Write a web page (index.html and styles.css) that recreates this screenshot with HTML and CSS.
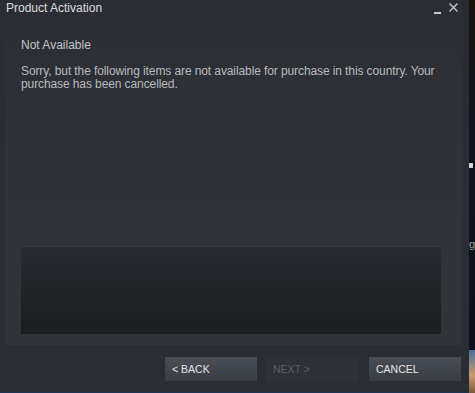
FILE: index.html
```html
<!DOCTYPE html>
<html>
<head>
<meta charset="utf-8">
<link rel="stylesheet" href="styles.css">
</head>
<body>
<div class="screen">
  <div class="window">
    <div class="titlebar">
      <span class="title">Product Activation</span>
      <div class="controls">
        <span class="min"></span>
        <svg class="close" width="9" height="9" viewBox="0 0 9 9"><path d="M0.5 0.5 L8.5 8.5 M8.5 0.5 L0.5 8.5" stroke="#c9cbcd" stroke-width="1.3"/></svg>
      </div>
    </div>
    <div class="panel">
      <div class="heading">Not Available</div>
      <p class="message">Sorry, but the following items are not available for purchase in this country. Your purchase has been cancelled.</p>
      <div class="itembox"></div>
    </div>
    <div class="footer">
      <button class="btn">&lt; BACK</button>
      <button class="btn disabled">NEXT &gt;</button>
      <button class="btn cancel">CANCEL</button>
    </div>
  </div>
  <div class="behind">
    <span class="frag frag1"></span>
    <span class="frag2">g</span>
    <span class="pic"></span>
  </div>
</div>
</body>
</html>
```
FILE: styles.css
```css
html, body {
  margin: 0;
  padding: 0;
  background: #0d1522;
}
.screen {
  display: flex;
  width: 475px;
  height: 393px;
  overflow: hidden;
  font-family: Arial, "Liberation Sans", sans-serif;
}
.window {
  width: 469px;
  height: 392px;
  background: linear-gradient(#2a2d34, #2a2d33);
  display: flex;
  flex-direction: column;
  border-bottom: 1px solid #1e3350;
  flex: none;
}
.titlebar {
  height: 27px;
  display: flex;
  justify-content: space-between;
  align-items: flex-start;
  padding-left: 6px;
  flex: none;
}
.title {
  font-size: 12px;
  color: #dcdedf;
  line-height: 14px;
  margin-top: 1px;
}
.controls {
  display: flex;
  align-items: flex-start;
  margin-right: 11px;
  margin-top: 3px;
}
.min {
  width: 7px;
  height: 2px;
  background: #c9cbcd;
  margin-top: 9px;
  margin-right: 8px;
}
.close { display: block; }
.panel {
  margin: 0 7px 0 5px;
  height: 318px;
  background: linear-gradient(#2b2e35, #2f3239 40%, #30333a);
  padding: 11px 21px 11px 16px;
  box-sizing: border-box;
  display: flex;
  flex-direction: column;
}
.heading {
  font-size: 12px;
  color: #c3c5c8;
  line-height: 14px;
}
.message {
  margin: 13px 0 0 0;
  font-size: 12px;
  line-height: 13px;
  color: #b8bbbe;
  letter-spacing: -0.1px;
}
.itembox {
  margin-top: auto;
  height: 88px;
  background: linear-gradient(#282b30, #1b1d20);
  border-top: 1px solid #363a41;
  box-sizing: border-box;
}
.footer {
  display: flex;
  justify-content: flex-end;
  padding-top: 12px;
  padding-right: 8px;
}
.btn {
  width: 92px;
  height: 24px;
  border: none;
  background: linear-gradient(#4a4e56, #383c43);
  color: #e3e4e6;
  font-family: Arial, "Liberation Sans", sans-serif;
  font-size: 10.5px;
  text-align: left;
  padding: 0 0 0 7px;
  margin-left: 9px;
}
.btn.cancel { margin-left: 11px; }
.btn.disabled {
  background: #2e3137;
  color: #5b5f65;
}
.behind {
  position: relative;
  flex: 1;
  background: linear-gradient(#1a1410 0%, #0f1620 30%, #0a101a 100%);
}
.frag1 {
  position: absolute;
  left: 0; top: 163px;
  width: 4px; height: 5px;
  background: #cfd2d6;
}
.frag2 {
  position: absolute;
  left: 0; top: 238px;
  font-size: 11px;
  color: #9aa3ad;
}
.pic {
  position: absolute;
  left: 0; top: 350px;
  width: 6px; height: 43px;
  background: linear-gradient(#4a6f9e, #c89a6a 60%, #7a5a40);
}
```
